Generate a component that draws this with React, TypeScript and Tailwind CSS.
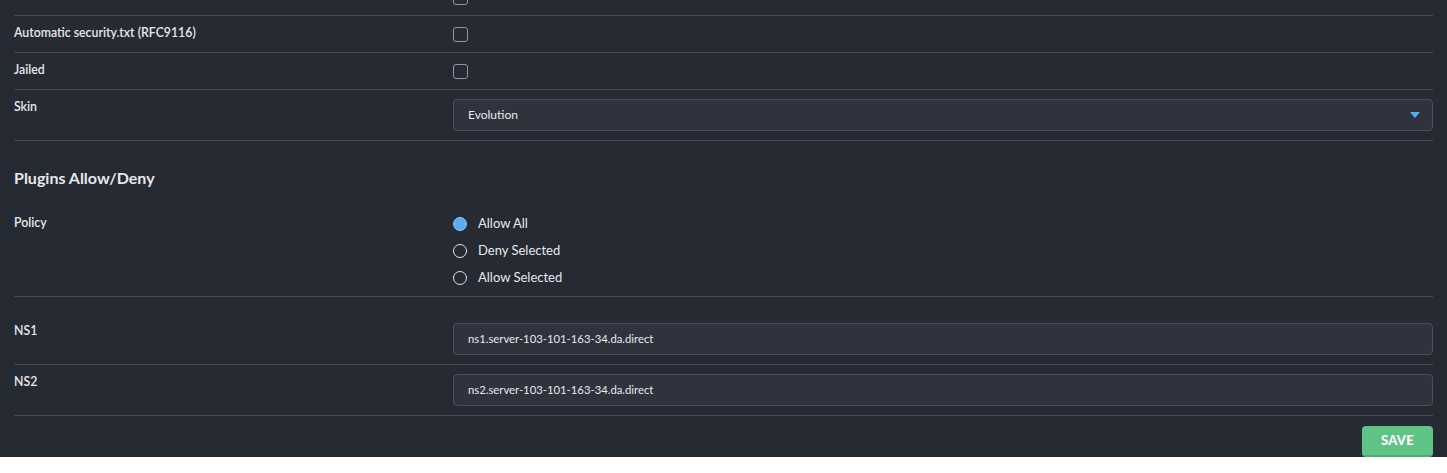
import { useState } from "react";

const font = { fontFamily: "Lato, 'Open Sans', sans-serif" };

function Row({
  label,
  children,
  className = "",
  labelClass = "",
}: {
  label: string;
  children: React.ReactNode;
  className?: string;
  labelClass?: string;
}) {
  return (
    <div className={`flex items-start border-b border-[#464a56] ${className}`}>
      <div className={`w-[439px] shrink-0 text-[12.3px] leading-4 font-semibold text-[#e6e8ec] ${labelClass}`}>{label}</div>
      <div className="flex-1">{children}</div>
    </div>
  );
}

function Checkbox() {
  return <div className="mt-[2px] h-[15px] w-[15px] rounded-[3px] border border-[#9096a3]" />;
}

function TextInput({ value }: { value: string }) {
  return (
    <div className="flex h-[32px] items-center rounded-[4px] border border-[#4a4f5b] bg-[#2f333d] pl-[14px] text-[11.3px] text-[#e6e8ec]">
      {value}
    </div>
  );
}

const policies = ["Allow All", "Deny Selected", "Allow Selected"];

export default function App() {
  const [policy, setPolicy] = useState("Allow All");

  return (
    <div className="min-h-[473px] bg-[#262a33] px-[14px]" style={font}>
      <div className="-mt-[21px]">
        <Row label="" className="pt-[9px] pb-[10px]">
          <Checkbox />
        </Row>
        <Row label="Automatic security.txt (RFC9116)" className="pt-[9px] pb-[10px]">
          <Checkbox />
        </Row>
        <Row label="Jailed" className="pt-[9px] pb-[10px]">
          <Checkbox />
        </Row>
        <Row label="Skin" className="pt-[9px] pb-[9px]">
          <div className="flex h-[32px] items-center justify-between rounded-[4px] border border-[#4a4f5b] bg-[#2f333d] pl-[14px] pr-[12px] text-[12px] text-[#e6e8ec]">
            <span>Evolution</span>
            <svg width="10" height="6" viewBox="0 0 10 6">
              <path d="M0 0h10L5 6z" fill="#4db2ef" />
            </svg>
          </div>
        </Row>
      </div>

      <h2 className="pt-[25px] text-[16px] leading-6 font-bold text-[#e6e8ec]">Plugins Allow/Deny</h2>

      <Row label="Policy" className="mt-[20px] pb-[5px]" labelClass="pt-[5px]">
        <div className="flex flex-col">
          {policies.map((p) => (
            <label key={p} className="flex h-[27px] cursor-pointer items-center gap-[11px] text-[13px] text-[#e6e8ec]" onClick={() => setPolicy(p)}>
              {policy === p ? (
                <span className="h-[14px] w-[14px] rounded-full border border-[#8cc8f2] bg-[#5aacea]" />
              ) : (
                <span className="h-[14px] w-[14px] rounded-full border-[1.5px] border-[#dfe2e7]" />
              )}
              {p}
            </label>
          ))}
        </div>
      </Row>

      <Row label="NS1" className="pt-[26px] pb-[9px]">
        <TextInput value="ns1.server-103-101-163-34.da.direct" />
      </Row>
      <Row label="NS2" className="pt-[9px] pb-[9px]">
        <TextInput value="ns2.server-103-101-163-34.da.direct" />
      </Row>

      <div className="flex justify-end pt-[10px]">
        <button className="h-[31px] w-[71px] rounded-[4px] border-b-2 border-[#4cad6c] bg-[#5fc386] text-[13px] font-black tracking-wide text-white">
          SAVE
        </button>
      </div>
    </div>
  );
}
